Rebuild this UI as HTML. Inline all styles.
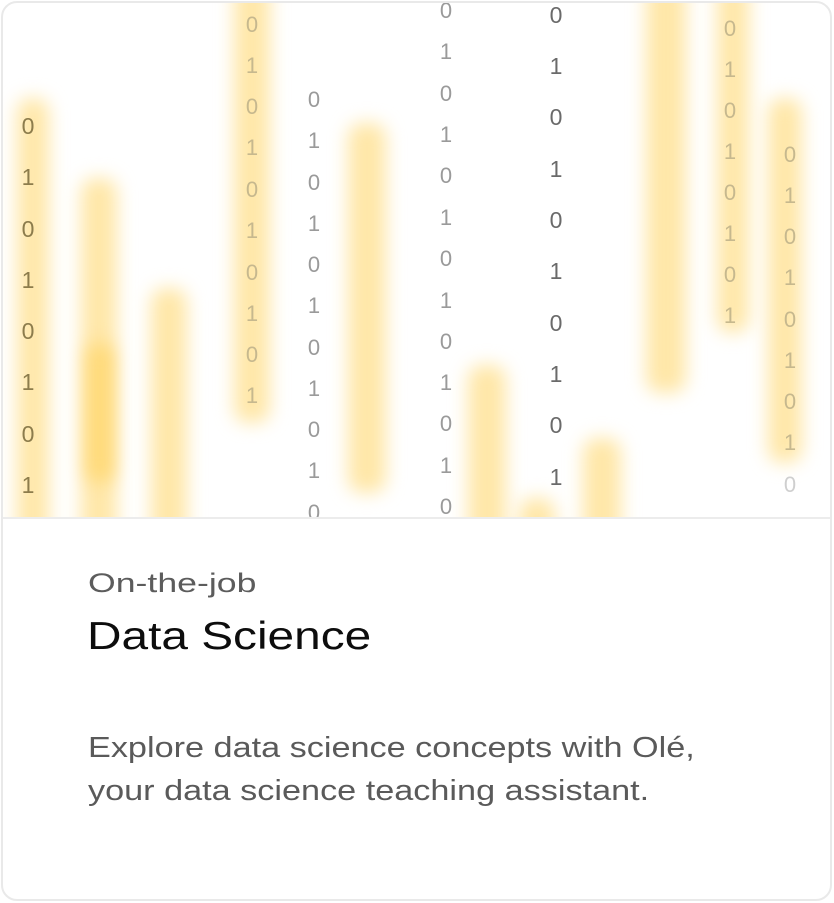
<!DOCTYPE html>
<html><head><meta charset="utf-8"><style>
*{margin:0;padding:0;box-sizing:border-box}
body{width:834px;height:903px;background:#fff;font-family:"Liberation Sans",sans-serif;position:relative;overflow:hidden}
.card{position:absolute;left:1px;top:1px;width:831px;height:900px;border:2px solid #e9e9e9;border-radius:16px;overflow:hidden;background:#fff}
.img{position:absolute;left:0;top:0;width:100%;height:516px;overflow:hidden;border-bottom:2px solid #ececec}
.bar{position:absolute;background:#ffe7a8;filter:blur(9px);border-radius:14px}
.d{position:absolute;font-size:23px;line-height:24px;width:22px;text-align:center}
.a{color:#8c7c4c}.b{color:#c6b88e;font-size:22px}.c{color:#9a9a9a;font-size:22px}.e{color:#6a6a6a}
h3,h2,p{transform-origin:0 0;white-space:nowrap}
h3{position:absolute;left:85px;top:565px;font-size:27px;font-weight:400;color:#5c5c5c;transform:scaleX(1.32)}
h2{position:absolute;left:84px;top:612px;font-size:39px;font-weight:400;color:#0d0d0d;transform:scaleX(1.225)}
p{position:absolute;left:85px;top:724px;font-size:29px;line-height:43px;color:#5a5a5a;transform:scaleX(1.18)}
</style></head><body>
<div class="card">
<div class="img">
<div class="bar" style="left:14px;top:95px;width:32px;height:460px"></div>
<div class="bar" style="left:78px;top:175px;width:36px;height:380px"></div>
<div class="bar" style="left:84px;top:340px;width:26px;height:140px;background:#ffd977"></div>
<div class="bar" style="left:148px;top:285px;width:36px;height:280px"></div>
<div class="bar" style="left:231px;top:-20px;width:36px;height:440px"></div>
<div class="bar" style="left:345px;top:120px;width:38px;height:370px"></div>
<div class="bar" style="left:465px;top:362px;width:38px;height:200px"></div>
<div class="bar" style="left:516px;top:495px;width:36px;height:60px"></div>
<div class="bar" style="left:580px;top:435px;width:38px;height:120px"></div>
<div class="bar" style="left:643px;top:-20px;width:40px;height:410px"></div>
<div class="bar" style="left:714px;top:-20px;width:32px;height:350px"></div>
<div class="bar" style="left:765px;top:95px;width:34px;height:365px"></div>

<div class="d a" style="left:14px;top:111px">0</div><div class="d a" style="left:14px;top:162px">1</div><div class="d a" style="left:14px;top:214px">0</div><div class="d a" style="left:14px;top:265px">1</div><div class="d a" style="left:14px;top:316px">0</div><div class="d a" style="left:14px;top:367px">1</div><div class="d a" style="left:14px;top:419px">0</div><div class="d a" style="left:14px;top:470px">1</div>

<div class="d b" style="left:238px;top:10px">0</div><div class="d b" style="left:238px;top:51px">1</div><div class="d b" style="left:238px;top:92px">0</div><div class="d b" style="left:238px;top:133px">1</div><div class="d b" style="left:238px;top:175px">0</div><div class="d b" style="left:238px;top:216px">1</div><div class="d b" style="left:238px;top:258px">0</div><div class="d b" style="left:238px;top:299px">1</div><div class="d b" style="left:238px;top:340px">0</div><div class="d b" style="left:238px;top:381px">1</div>

<div class="d c" style="left:300px;top:85px">0</div><div class="d c" style="left:300px;top:126px">1</div><div class="d c" style="left:300px;top:168px">0</div><div class="d c" style="left:300px;top:209px">1</div><div class="d c" style="left:300px;top:250px">0</div><div class="d c" style="left:300px;top:291px">1</div><div class="d c" style="left:300px;top:333px">0</div><div class="d c" style="left:300px;top:374px">1</div><div class="d c" style="left:300px;top:415px">0</div><div class="d c" style="left:300px;top:456px">1</div><div class="d c" style="left:300px;top:498px">0</div>

<div class="d c" style="left:432px;top:-4px">0</div><div class="d c" style="left:432px;top:37px">1</div><div class="d c" style="left:432px;top:79px">0</div><div class="d c" style="left:432px;top:120px">1</div><div class="d c" style="left:432px;top:161px">0</div><div class="d c" style="left:432px;top:203px">1</div><div class="d c" style="left:432px;top:244px">0</div><div class="d c" style="left:432px;top:286px">1</div><div class="d c" style="left:432px;top:327px">0</div><div class="d c" style="left:432px;top:368px">1</div><div class="d c" style="left:432px;top:409px">0</div><div class="d c" style="left:432px;top:451px">1</div><div class="d c" style="left:432px;top:492px">0</div>

<div class="d e" style="left:542px;top:0px">0</div><div class="d e" style="left:542px;top:51px">1</div><div class="d e" style="left:542px;top:102px">0</div><div class="d e" style="left:542px;top:154px">1</div><div class="d e" style="left:542px;top:205px">0</div><div class="d e" style="left:542px;top:256px">1</div><div class="d e" style="left:542px;top:308px">0</div><div class="d e" style="left:542px;top:359px">1</div><div class="d e" style="left:542px;top:410px">0</div><div class="d e" style="left:542px;top:462px">1</div>

<div class="d b" style="left:716px;top:14px">0</div><div class="d b" style="left:716px;top:55px">1</div><div class="d b" style="left:716px;top:96px">0</div><div class="d b" style="left:716px;top:137px">1</div><div class="d b" style="left:716px;top:178px">0</div><div class="d b" style="left:716px;top:219px">1</div><div class="d b" style="left:716px;top:260px">0</div><div class="d b" style="left:716px;top:301px">1</div>

<div class="d b" style="left:776px;top:140px">0</div><div class="d b" style="left:776px;top:181px">1</div><div class="d b" style="left:776px;top:222px">0</div><div class="d b" style="left:776px;top:263px">1</div><div class="d b" style="left:776px;top:305px">0</div><div class="d b" style="left:776px;top:346px">1</div><div class="d b" style="left:776px;top:387px">0</div><div class="d b" style="left:776px;top:428px">1</div><div class="d b" style="left:776px;top:470px;color:#cfcfcf">0</div>
</div>
<h3>On-the-job</h3>
<h2>Data Science</h2>
<p>Explore data science concepts with Olé,<br>your data science teaching assistant.</p>
</div>
</body></html>
